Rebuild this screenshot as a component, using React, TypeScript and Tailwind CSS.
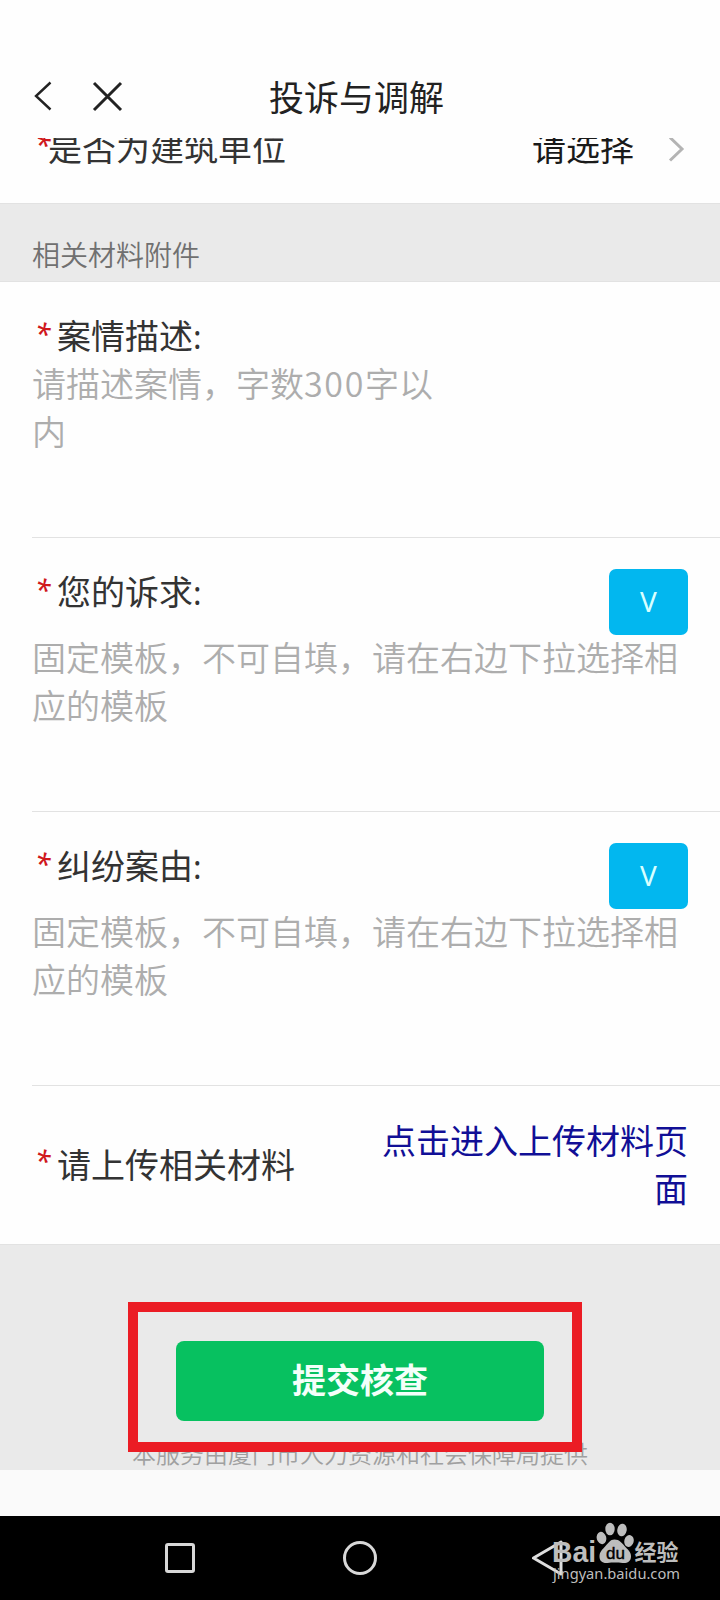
import type { ReactNode } from 'react';

const TEMPLATE_HINT = '固定模板，不可自填，请在右边下拉选择相应的模板';

function Star() {
  return (
    <span className="mb-[5px] inline-block w-[14px] shrink-0 font-['Noto_Sans'] text-[28px] font-medium italic text-[#d0181c]">
      *
    </span>
  );
}

function Label({ children, colon }: { children: ReactNode; colon?: boolean }) {
  return (
    <div className="flex h-12 items-center pl-[3px] leading-[48px] text-[#333]">
      <Star />
      <span className="ml-2 whitespace-nowrap">
        {children}
        {colon && <span className="font-['Noto_Sans'] text-[32px]">:</span>}
      </span>
    </div>
  );
}

function TemplateField({ label }: { label: string }) {
  return (
    <div className="ml-8 flex h-[274px] flex-col border-b border-[#e2e2e2]">
      <div className="flex justify-between pr-8 pt-[31px]">
        <div className="-mt-px">
          <Label colon>{label}</Label>
        </div>
        <button className="h-[66px] w-[79px] rounded-[7px] bg-[#02b7ef] pb-[2px] font-['Noto_Sans'] text-[28px] text-[#d8ffff]">
          V
        </button>
      </div>
      <p className="-mt-[2px] w-[656px] leading-[48px] font-[350] text-[#adadad]">{TEMPLATE_HINT}</p>
    </div>
  );
}

function Watermark() {
  return (
    <svg className="absolute left-[550px] top-0 h-[84px] w-[140px]" viewBox="0 0 140 84" fill="#bdbdbd">
      <text x="2" y="46" fontFamily="Liberation Sans" fontWeight="700" fontSize="29" textLength="44" lengthAdjust="spacingAndGlyphs">
        Bai
      </text>
      <ellipse cx="51.500" cy="22" rx="4.800" ry="6.200" transform="rotate(-15 51.500 22)" />
      <ellipse cx="60" cy="13" rx="4.700" ry="6.300" />
      <ellipse cx="72" cy="14" rx="4.700" ry="6.300" transform="rotate(10 72 14)" />
      <ellipse cx="79" cy="25" rx="4.700" ry="6" transform="rotate(15 79 25)" />
      <path d="M64.500 23.500c5 0 7.500 3.500 10 6.500 3 3.500 6.500 5.500 6.500 10.500 0 5-4 7-8.500 6.500-5-.6-10-.6-15 0-5 .5-8-2-8-6.500 0-5 3-7 6-10.500 3-3 4.500-6.500 9-6.500z" />
      <text x="56" y="43" fontFamily="Liberation Sans" fontWeight="400" fontSize="17" fill="#000" stroke="#000" strokeWidth="0.400">
        du
      </text>
      <text x="84.500" y="44" fontFamily="Noto Sans CJK SC" fontWeight="700" fontSize="22" textLength="44">
        经验
      </text>
      <text x="3" y="63" fontFamily="Noto Sans" fontSize="14" textLength="127" lengthAdjust="spacingAndGlyphs">
        jingyan.baidu.com
      </text>
    </svg>
  );
}

export default function App() {
  return (
    <div className="flex h-[1600px] w-[720px] flex-col overflow-hidden bg-[#fefefe] font-['Noto_Sans_CJK_SC',sans-serif] text-[34px]">
      <header className="z-10 flex h-[138px] shrink-0 items-end bg-[#fefefe]">
        <div className="grid h-[84px] w-full grid-cols-[1fr_auto_1fr] items-center">
          <div className="flex items-center pl-[34px]">
            <svg className="h-8 w-[18px]" viewBox="0 0 18 32" fill="none" stroke="#222" strokeWidth="2.400">
              <path d="M16.500 2.500 2 16l14.500 13.500" />
            </svg>
            <svg className="ml-10 h-8 w-8" viewBox="0 0 32 32" fill="none" stroke="#222" strokeWidth="3">
              <path d="m2 3 27 27M29 3 2 30" />
            </svg>
          </div>
          <h1 className="pr-[7px] text-[35px] leading-[50px] text-[#222]">投诉与调解</h1>
          <span />
        </div>
      </header>

      <div className="flex h-[65px] shrink-0 items-start justify-between overflow-hidden pl-[35px] pr-[34px]">
        <div className="-mt-[15px] flex h-12 items-center leading-[48px] text-[#333]">
          <Star />
          <span className="-ml-px">是否为建筑单位</span>
        </div>
        <div className="-mt-[15px] flex items-center leading-[48px] text-[#1a1a1a]">
          请选择
          <svg className="ml-7 mt-[2px] h-8 w-6" viewBox="0 0 24 32" fill="none" stroke="#b4b4b4" strokeWidth="3">
            <path d="M8 5.500 20 17 8 28.500" />
          </svg>
        </div>
      </div>

      <div className="h-[79px] shrink-0 border-y border-[#e2e2e2] bg-[#eaeaea] pl-8 pt-[30px] text-[28px] leading-10 font-[350] text-[#707070]">
        相关材料附件
      </div>

      <div className="ml-8 h-[256px] shrink-0 border-b border-[#e2e2e2] pt-[30px]">
        <Label colon>案情描述</Label>
        <p className="-mt-px w-[420px] leading-[48px] font-[350] text-[#adadad]">
          请描述案情，字数<span className="tracking-[1.7px]">300</span>字以内
        </p>
      </div>

      <TemplateField label="您的诉求" />
      <TemplateField label="纠纷案由" />

      <div className="ml-8 flex h-[158px] shrink-0 items-center justify-between pb-[3px] pr-8">
        <Label>请上传相关材料</Label>
        <a className="w-[310px] text-right leading-[48px] text-[#110f96]">点击进入上传材料页面</a>
      </div>

      <div className="relative flex h-[226px] shrink-0 flex-col items-center border-t border-[#e2e2e2] bg-[#eaeaea] pt-24">
        <button className="h-20 w-[368px] shrink-0 rounded-lg bg-[#07c160] pb-[6px] font-bold text-[#f4fffa]">
          提交核查
        </button>
        <p className="mt-[14px] whitespace-nowrap text-[24px] leading-9 font-[350] text-[#a0a0a0]">
          本服务由厦门市人力资源和社会保障局提供
        </p>
        <div className="absolute left-32 top-[57px] h-[150px] w-[454px] border-[10px] border-[#eb1c24]" />
      </div>

      <div className="h-[46px] shrink-0 bg-[#fafafa]" />

      <nav className="relative h-[84px] shrink-0 bg-black">
        <div className="grid h-full grid-cols-[360px_360px] items-center">
          <span className="ml-[165px] h-[30px] w-[30px] rounded-[3px] border-[3px] border-[#d8d8d8]" />
          <span className="-ml-[17px] h-[34px] w-[34px] rounded-full border-[3px] border-[#d8d8d8]" />
        </div>
        <svg className="absolute left-[530px] top-6 h-9 w-9" viewBox="0 0 36 36" fill="none" stroke="#dedede" strokeWidth="3" strokeLinejoin="round">
          <path d="M31 2v32L3.500 18z" />
        </svg>
        <Watermark />
      </nav>
    </div>
  );
}
